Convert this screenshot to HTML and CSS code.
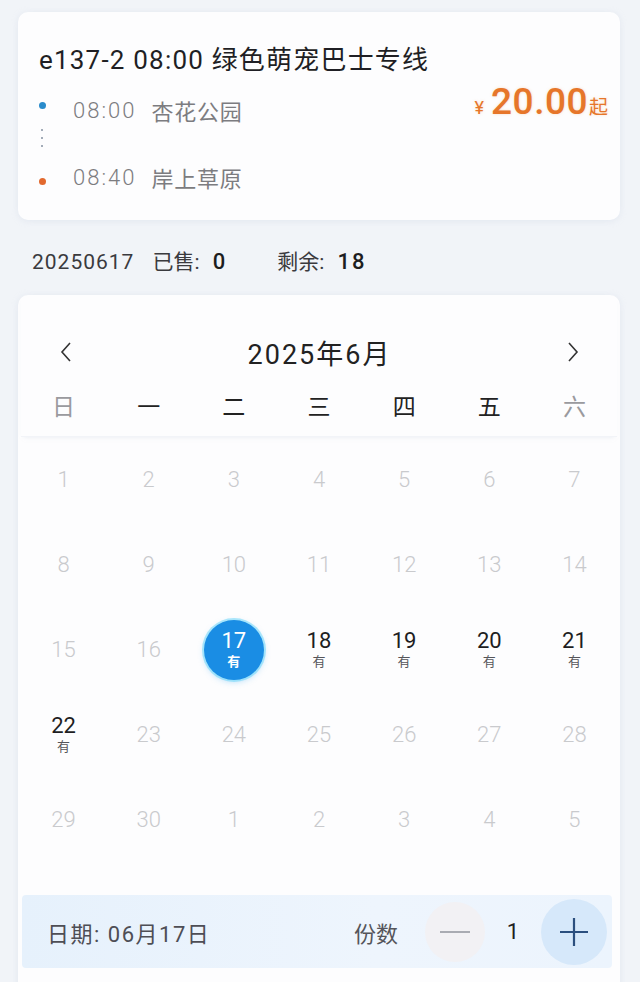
FILE: index.html
```html
<!DOCTYPE html>
<html lang="zh">
<head>
<meta charset="utf-8">
<link rel="stylesheet" href="styles.css">
</head>
<body>
<div class="page">
  <div class="card trip">
    <div class="trip-left">
      <div class="title">e137-2 08:00 绿色萌宠巴士专线</div>
      <div class="stop">
        <span class="dot dot-blue"></span>
        <span class="time">08:00</span><span class="station">杏花公园</span>
      </div>
      <div class="connector"><span class="dash"></span></div>
      <div class="stop">
        <span class="dot dot-orange"></span>
        <span class="time">08:40</span><span class="station">岸上草原</span>
      </div>
    </div>
    <div class="price"><span class="yen">¥</span><span class="amount">20.00</span><span class="qi">起</span></div>
  </div>

  <div class="info"><span class="code">20250617</span>已售: <b>0</b><span class="sp"></span>剩余: <b>18</b></div>

  <div class="card cal">
    <div class="cal-head">
      <div class="month-row">
        <span class="arrow">
          <svg width="14" height="22" viewBox="0 0 14 22"><path d="M11 2 L3 11 L11 20" fill="none" stroke="#333" stroke-width="1.6"/></svg>
        </span>
        <span class="month">2025年6月</span>
        <span class="arrow">
          <svg width="14" height="22" viewBox="0 0 14 22"><path d="M3 2 L11 11 L3 20" fill="none" stroke="#333" stroke-width="1.6"/></svg>
        </span>
      </div>
      <div class="week">
        <span class="wk-end">日</span><span>一</span><span>二</span><span>三</span><span>四</span><span>五</span><span class="wk-end">六</span>
      </div>
    </div>
    <div class="grid">
      <div class="cell off"><span class="num">1</span></div>
      <div class="cell off"><span class="num">2</span></div>
      <div class="cell off"><span class="num">3</span></div>
      <div class="cell off"><span class="num">4</span></div>
      <div class="cell off"><span class="num">5</span></div>
      <div class="cell off"><span class="num">6</span></div>
      <div class="cell off"><span class="num">7</span></div>

      <div class="cell off"><span class="num">8</span></div>
      <div class="cell off"><span class="num">9</span></div>
      <div class="cell off"><span class="num">10</span></div>
      <div class="cell off"><span class="num">11</span></div>
      <div class="cell off"><span class="num">12</span></div>
      <div class="cell off"><span class="num">13</span></div>
      <div class="cell off"><span class="num">14</span></div>

      <div class="cell off"><span class="num">15</span></div>
      <div class="cell off"><span class="num">16</span></div>
      <div class="cell on sel"><div class="bubble"><span class="num">17</span><span class="has">有</span></div></div>
      <div class="cell on"><div class="bubble"><span class="num">18</span><span class="has">有</span></div></div>
      <div class="cell on"><div class="bubble"><span class="num">19</span><span class="has">有</span></div></div>
      <div class="cell on"><div class="bubble"><span class="num">20</span><span class="has">有</span></div></div>
      <div class="cell on"><div class="bubble"><span class="num">21</span><span class="has">有</span></div></div>

      <div class="cell on"><div class="bubble"><span class="num">22</span><span class="has">有</span></div></div>
      <div class="cell off"><span class="num">23</span></div>
      <div class="cell off"><span class="num">24</span></div>
      <div class="cell off"><span class="num">25</span></div>
      <div class="cell off"><span class="num">26</span></div>
      <div class="cell off"><span class="num">27</span></div>
      <div class="cell off"><span class="num">28</span></div>

      <div class="cell off"><span class="num">29</span></div>
      <div class="cell off"><span class="num">30</span></div>
      <div class="cell off"><span class="num">1</span></div>
      <div class="cell off"><span class="num">2</span></div>
      <div class="cell off"><span class="num">3</span></div>
      <div class="cell off"><span class="num">4</span></div>
      <div class="cell off"><span class="num">5</span></div>
    </div>
    <div class="bar">
      <span class="date">日期: 06月17日</span>
      <span class="qty-label">份数</span>
      <span class="btn minus"><span class="minus-line"></span></span>
      <span class="count">1</span>
      <span class="btn plus">
        <svg width="32" height="32" viewBox="0 0 32 32"><path d="M16 2 V30 M2 16 H30" stroke="#2b4f7e" stroke-width="2.2" fill="none"/></svg>
      </span>
    </div>
  </div>
</div>
</body>
</html>
```
FILE: styles.css
```css
html, body {
  margin: 0;
  padding: 0;
}
body {
  background: #f1f4f8;
  font-family: Roboto, "Noto Sans CJK SC", sans-serif;
  color: #222;
  width: 640px;
  height: 982px;
  overflow: hidden;
}
.page {
  padding: 12px 20px 0 18px;
}
.card {
  background: #fdfdfe;
  border-radius: 10px;
  box-shadow: 0 1px 6px rgba(200, 210, 225, 0.35);
}
.trip {
  height: 208px;
  box-sizing: border-box;
  padding: 30px 12px 0 21px;
  display: flex;
  justify-content: space-between;
  align-items: flex-start;
}
.title {
  font-size: 26px;
  line-height: 36px;
  color: #1f1f24;
  letter-spacing: 1.2px;
  white-space: nowrap;
}
.stop {
  margin-top: 18px;
  display: flex;
  align-items: center;
  height: 28px;
  font-size: 22px;
  color: #7c7c80;
}
.connector + .stop {
  margin-top: 0;
}
.dot {
  width: 7px;
  height: 7px;
  border-radius: 50%;
  margin: 0 27px 0 0;
  flex: none;
}
.dot-blue { background: #2a8bcb; transform: translateY(-5px); }
.dot-orange { background: #e2692e; transform: translateY(4px); }
.time {
  font-weight: 300;
  letter-spacing: 2px;
  margin-right: 15px;
}
.station {
  letter-spacing: 0.8px;
}
.connector {
  height: 39px;
  display: flex;
  padding-left: 2px;
}
.dash {
  width: 1.5px;
  height: 22px;
  margin-top: 5px;
  background: repeating-linear-gradient(to bottom, #a3acb8 0 2px, transparent 2px 8px);
}
.price {
  margin-top: 38px;
  color: #e6762a;
  display: flex;
  align-items: baseline;
  text-shadow: 0 0 3px rgba(240, 160, 90, 0.35);
}
.yen {
  font-size: 18px;
  margin-right: 7px;
}
.amount {
  font-size: 37px;
  font-weight: 500;
  letter-spacing: 0.5px;
}
.qi {
  font-size: 19px;
  margin-left: 1px;
}
.info {
  margin-top: 27px;
  padding-left: 14px;
  height: 30px;
  line-height: 30px;
  font-size: 21px;
  color: #3a3a3e;
}
.code {
  letter-spacing: 1px;
  margin-right: 18px;
}
.info b {
  font-weight: 500;
  font-size: 22px;
  letter-spacing: 2px;
  color: #1d1d20;
  margin-left: 8px;
}
.sp {
  display: inline-block;
  width: 50px;
}
.cal {
  margin-top: 18px;
  height: 720px;
  padding: 0 3px;
  box-sizing: border-box;
}
.cal-head {
  height: 142px;
  box-sizing: border-box;
  padding-top: 37px;
  border-bottom: 1px solid #f2f4f8;
  box-shadow: 0 3px 4px -3px rgba(210, 218, 230, 0.5);
}
.month-row {
  height: 40px;
  display: flex;
  align-items: center;
  justify-content: space-between;
  padding: 0 37px 0 38px;
}
.arrow {
  display: flex;
  width: 14px;
}
.month {
  font-size: 27px;
  color: #222;
  letter-spacing: 2px;
}
.week {
  margin-top: 16px;
  display: grid;
  grid-template-columns: repeat(7, 1fr);
  height: 40px;
  line-height: 40px;
  text-align: center;
  font-size: 23px;
  color: #222;
}
.wk-end {
  color: #9a9a9e;
}
.grid {
  display: grid;
  grid-template-columns: repeat(7, 1fr);
  grid-auto-rows: 85px;
}
.cell {
  display: flex;
  align-items: center;
  justify-content: center;
}
.cell.off .num {
  font-size: 22px;
  font-weight: 300;
  color: #c9cacd;
}
.bubble {
  width: 60px;
  height: 60px;
  border-radius: 50%;
  display: flex;
  flex-direction: column;
  align-items: center;
  justify-content: center;
}
.bubble .num {
  font-size: 22px;
  line-height: 25px;
  color: #1e1e22;
}
.bubble .has {
  font-size: 13px;
  line-height: 18px;
  color: #55555a;
}
.sel .bubble {
  background: #1a8de4;
  box-shadow: 0 0 0 2px rgba(110, 215, 250, 0.55), 0 2px 6px rgba(60, 170, 240, 0.35);
}
.sel .bubble .num,
.sel .bubble .has {
  color: #fff;
}
.sel .bubble .has {
  font-weight: 700;
}
.bar {
  margin-top: 33px;
  height: 73px;
  display: flex;
  align-items: center;
  padding: 0 5px 0 25px;
  background: linear-gradient(90deg, #e6f1fc 0%, #eef5fd 60%, #ecf4fd 100%);
  border-radius: 4px;
  margin-left: 1px;
  margin-right: 5px;
}
.date {
  flex: 1;
  font-size: 22px;
  color: #4e4e55;
  letter-spacing: 1.5px;
}
.qty-label {
  font-size: 22px;
  color: #55555b;
  margin-right: 27px;
}
.btn {
  display: flex;
  align-items: center;
  justify-content: center;
  border-radius: 50%;
}
.minus {
  width: 60px;
  height: 60px;
  background: #f2f1f4;
}
.minus-line {
  width: 30px;
  height: 2px;
  background: #a9abb2;
}
.count {
  width: 56px;
  text-align: center;
  font-size: 22px;
  color: #1e1e22;
}
.plus {
  width: 66px;
  height: 66px;
  background: #d6e8fa;
}
```
